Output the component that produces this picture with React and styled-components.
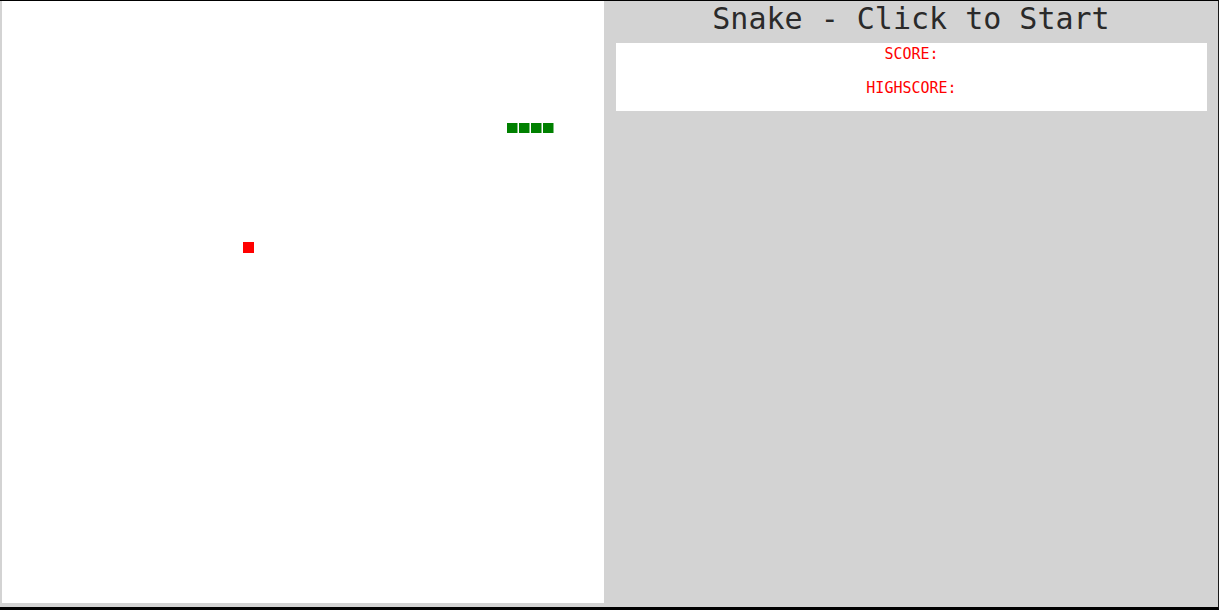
import React from "react";
import styled, { createGlobalStyle } from "styled-components";

const GlobalStyle = createGlobalStyle`
  html, body { margin: 0; padding: 0; background: #d3d3d3; }
  body { font-family: "DejaVu Sans Mono", "Liberation Mono", monospace; }
`;

const Frame = styled.div`
  box-sizing: border-box;
  width: 1219px;
  height: 610px;
  display: flex;
  background: #d3d3d3;
  border-top: 1px solid #000;
  border-right: 1px solid #1a1a1a;
  border-bottom: 3px solid #000;
  padding: 0 0 4px 2px;
`;

const Board = styled.svg`
  display: block;
  flex: 0 0 602px;
  width: 602px;
  height: 602px;
  background: #fff;
`;

const Panel = styled.div`
  flex: 1;
  display: flex;
  flex-direction: column;
`;

const Title = styled.h1`
  margin: 0;
  height: 36px;
  line-height: 36px;
  font-family: "DejaVu Sans Mono", "Liberation Mono", monospace;
  font-weight: normal;
  font-size: 30px;
  color: #2a2a2a;
  text-align: center;
`;

const ScoreBox = styled.div`
  margin: 6px 0 0 12px;
  width: 591px;
  height: 68px;
  box-sizing: border-box;
  background: #fff;
  padding-top: 3px;
  display: flex;
  flex-direction: column;
  gap: 17px;
`;

const ScoreLine = styled.div`
  font-family: "DejaVu Sans Mono", "Liberation Mono", monospace;
  font-size: 15px;
  line-height: 17px;
  color: #ff0000;
  text-align: center;
`;

const CELL = 12;
const snake = [42, 43, 44, 45].map((x) => ({ x, y: 10 }));
const food = { x: 20, y: 20 };

export default function App() {
  return (
    <>
      <GlobalStyle />
      <Frame>
        <Board viewBox="0 0 602 602">
          {snake.map((s, i) => (
            <rect key={i} x={s.x * CELL + 1} y={s.y * CELL + 2} width={10.5} height={10} fill="#008000" />
          ))}
          <rect x={food.x * CELL + 1} y={food.y * CELL + 1} width={11} height={11} fill="#ff0000" />
        </Board>
        <Panel>
          <Title>Snake - Click to Start</Title>
          <ScoreBox>
            <ScoreLine>SCORE:</ScoreLine>
            <ScoreLine>HIGHSCORE:</ScoreLine>
          </ScoreBox>
        </Panel>
      </Frame>
    </>
  );
}
